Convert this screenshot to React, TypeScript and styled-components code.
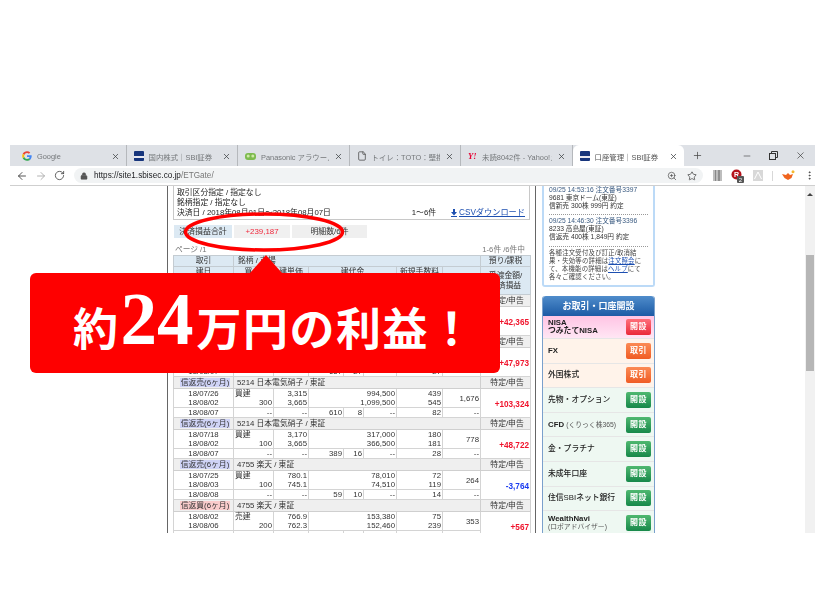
import React from "react";
import styled, { createGlobalStyle } from "styled-components";
import { ArrowLeft, ArrowRight, RotateCw, Lock, ZoomIn, Star, MoreVertical, X, Plus, Minus, File } from "lucide-react";

const Global = createGlobalStyle`
  html, body { margin: 0; padding: 0; background: #fff; }
  body { font-family: "Liberation Sans", "Noto Sans CJK JP", sans-serif; }
  * { box-sizing: border-box; }
`;

const Page = styled.div`
  position: relative;
  width: 825px;
  height: 615px;
  overflow: hidden;
  padding: 145px 10px 0;
  background: #fff;
`;
const Browser = styled.div`
  width: 805px;
  height: 388px;
  display: flex;
  flex-direction: column;
  overflow: hidden;
  filter: blur(0.35px);
`;
const TabStrip = styled.div`
  height: 21px;
  flex: none;
  background: #dee1e6;
  display: flex;
  align-items: stretch;
  padding-left: 5px;
`;
const Tab = styled.div<{ $active?: boolean }>`
  width: 111.5px;
  display: flex;
  align-items: center;
  gap: 5px;
  padding: 1px 6px 0 7px;
  font-size: 7.4px;
  color: ${(p) => (p.$active ? "#555" : "#74777a")};
  background: ${(p) => (p.$active ? "#fff" : "transparent")};
  border-radius: ${(p) => (p.$active ? "6px 6px 0 0" : "0")};
  border-right: ${(p) => (p.$active ? "none" : "1px solid #b5b8bc")};
  background-clip: ${(p) => (p.$active ? "border-box" : "padding-box")};
`;
const TabLabel = styled.span`
  flex: 1;
  min-width: 0;
  white-space: nowrap;
  overflow: hidden;
`;
const TabClose = styled(X)`
  flex: none;
  color: #3c4043;
`;
const NewTab = styled.div`
  width: 26px;
  display: flex;
  align-items: center;
  justify-content: center;
  color: #444;
`;
const WindowControls = styled.div`
  margin-left: auto;
  display: flex;
  align-items: center;
  color: #333;
  padding-right: 1px;
`;
const WindowButton = styled.div`
  width: 27px;
  display: flex;
  justify-content: center;
`;
const SbiIcon = styled.span`
  flex: none;
  width: 10px;
  height: 10px;
  background: linear-gradient(#17357c 0 55%, #e8e8f0 55% 70%, #17357c 70%);
  border-radius: 1px;
`;
const YahooMark = styled.span`
  flex: none;
  color: #e60033;
  font: italic bold 8.5px "Liberation Serif", serif;
  width: 9px;
`;
const Toolbar = styled.div`
  height: 20px;
  flex: none;
  background: #fff;
  border-bottom: 1px solid #cfcfcf;
  display: flex;
  align-items: center;
  padding: 0 7px 0 6px;
  color: #555;
`;
const NavIcons = styled.div`
  display: flex;
  gap: 7px;
  width: 58px;
  flex: none;
  color: #444;
`;
const Omnibox = styled.div`
  flex: none;
  width: 629px;
  height: 15px;
  border-radius: 8px;
  background: #f1f3f4;
  display: flex;
  align-items: center;
  padding: 0 6px;
  gap: 6px;
`;
const UrlText = styled.div`
  flex: 1;
  font-size: 8.2px;
  color: #202124;
`;
const UrlPath = styled.span`
  color: #777;
`;
const OmniIcons = styled.div`
  display: flex;
  gap: 10px;
  color: #444;
`;
const Extensions = styled.div`
  flex: 1;
  display: flex;
  align-items: center;
  gap: 9px;
  padding-left: 10px;
`;
const ExtSeparator = styled.span`
  width: 1px;
  height: 10px;
  background: #d8d8d8;
`;
const Content = styled.div`
  flex: 1;
  min-height: 0;
  display: flex;
  background: #fff;
  padding-left: 157px;
  overflow: hidden;
`;
const MainColumn = styled.div`
  flex: none;
  width: 369px;
  border-left: 1px solid #666;
  border-right: 1px solid #666;
  padding: 0 5px;
  color: #222;
  font-size: 7.8px;
`;
const FilterBox = styled.div`
  height: 34px;
  border: 1px solid #c8c8c8;
  border-top: none;
  padding: 2px 3px 0;
  line-height: 10px;
  font-size: 7.8px;
  position: relative;
`;
const FilterLast = styled.div`
  display: flex;
  justify-content: space-between;
  padding-right: 1px;
`;
const FilterRight = styled.div`
  display: flex;
  gap: 15px;
`;
const CsvLink = styled.span`
  color: #1d4fb0;
  text-decoration: underline;
  display: inline-flex;
  align-items: center;
  gap: 2px;
  font-size: 8.2px;
`;
const SummaryRow = styled.div`
  display: flex;
  gap: 2px;
  margin: 5px 0 0 1px;
  height: 13px;
  line-height: 13px;
  text-align: center;
  font-size: 7.9px;
`;
const SummaryCell = styled.div<{ $w: number; $bg: string; $red?: boolean }>`
  width: ${(p) => p.$w}px;
  background: ${(p) => p.$bg};
  color: ${(p) => (p.$red ? "#f0283c" : "#333")};
`;
const PagerRow = styled.div`
  display: flex;
  justify-content: space-between;
  margin-top: 7px;
  height: 10px;
  line-height: 10px;
  padding: 0 5px 0 2px;
  color: #777;
  font-size: 7.7px;
`;
const Trade = styled.table`
  width: 357px;
  table-layout: fixed;
  border-collapse: collapse;
  font-size: 7.8px;
  line-height: 9px;
  color: #333;
`;
const HeadCell = styled.td`
  background: #dce9f3;
  border: 1px solid #c4ccd2;
  text-align: center;
  padding: 0;
  vertical-align: top;
  height: 11px;
  line-height: 10px;
`;
const HeadMiddle = styled(HeadCell)`
  vertical-align: middle;
`;
const HeadLeft = styled(HeadCell)`
  text-align: left;
  padding-left: 4px;
`;
const GroupCell = styled.td<{ $center?: boolean }>`
  background: #efefef;
  border: 1px solid #cfcfcf;
  height: 12px;
  padding: 0 0 0 3px;
  text-align: ${(p) => (p.$center ? "center" : "left")};
  white-space: nowrap;
`;
const TypeLabel = styled.span<{ $kind: "sell" | "buy" }>`
  background: ${(p) => (p.$kind === "sell" ? "#cfd3f6" : "#f9cccc")};
  padding: 0 1px;
`;
const DataCell = styled.td<{ $h?: number }>`
  background: #fff;
  border: 1px solid #d4d4d4;
  padding: 0 1px;
  height: ${(p) => p.$h ?? 10}px;
  text-align: right;
  white-space: nowrap;
`;
const DateCell = styled(DataCell)`
  text-align: center;
`;
const ProfitCell = styled(DataCell)<{ $loss?: boolean }>`
  color: ${(p) => (p.$loss ? "#1a3cf0" : "#f0142c")};
  font-weight: 700;
  font-size: 8.2px;
  vertical-align: middle;
  padding-top: 2px;
`;
const SplitLine = styled.div<{ $between?: boolean }>`
  display: flex;
  justify-content: ${(p) => (p.$between ? "flex-start" : "flex-end")};
`;
const Side = styled.div`
  flex: none;
  width: 113px;
  margin-left: 6px;
  display: flex;
  flex-direction: column;
  gap: 9px;
`;
const OrderBox = styled.div`
  height: 101px;
  flex: none;
  border: 2px solid #bcdaf7;
  border-top: none;
  border-radius: 0 0 3px 3px;
  padding: 0 5px;
  font-size: 6.7px;
  line-height: 8.1px;
  color: #333;
  white-space: nowrap;
`;
const OrderHead = styled.div`
  color: #3a5a80;
`;
const Dots = styled.div`
  border-top: 1px dotted #999;
  margin: 4px 0 2px;
`;
const Notes = styled.div`
  white-space: normal;
  font-size: 6.4px;
  letter-spacing: 0.2px;
  color: #444;
`;
const NoteLink = styled.span`
  color: #1d4fb0;
  text-decoration: underline;
`;
const MenuPanel = styled.div`
  border: solid #7aa0cc;
  border-width: 0 1px;
  border-radius: 3px 3px 0 0;
`;
const MenuTitle = styled.div`
  height: 20px;
  line-height: 20px;
  text-align: center;
  font-size: 9px;
  font-weight: 700;
  color: #fff;
  border-radius: 3px 3px 0 0;
  background: linear-gradient(#4f8ccb, #1c5aa5);
`;
const MenuRow = styled.div<{ $bg: string; $h?: number }>`
  height: ${(p) => p.$h ?? 24.6}px;
  display: flex;
  align-items: center;
  justify-content: space-between;
  padding: 0 3px 0 5px;
  background: ${(p) => p.$bg};
  border-bottom: 1px solid #e6e6e6;
  font-size: 7.8px;
  line-height: 8px;
  color: #222;
  font-weight: 500;
`;
const MenuStrong = styled.span`
  font-weight: 700;
`;
const MenuSub = styled.span`
  font-size: 6.8px;
  font-weight: 400;
  color: #555;
`;
const MenuButton = styled.span<{ $kind: "red" | "orange" | "green" }>`
  flex: none;
  width: 25px;
  height: 16px;
  border-radius: 2px;
  text-align: center;
  line-height: 16px;
  font-size: 8px;
  font-weight: 700;
  letter-spacing: 0.5px;
  color: #fff;
  background: ${(p) =>
    p.$kind === "red"
      ? "linear-gradient(#ff6f7a,#ea2a3a)"
      : p.$kind === "orange"
      ? "linear-gradient(#fb8a55,#f05c24)"
      : "linear-gradient(#4fb870,#17884a)"};
`;
const Scrollbar = styled.div`
  margin-left: auto;
  flex: none;
  width: 10px;
  background: #f1f1f1;
  display: flex;
  flex-direction: column;
  align-items: center;
`;
const ScrollArrow = styled.div`
  height: 10px;
  padding-top: 4px;
  width: 100%;
  background: #f1f1f1;
  display: flex;
  justify-content: center;
  &::before {
    content: "";
    border: 3px solid transparent;
    border-top: none;
    border-bottom: 3px solid #444;
  }
`;
const ScrollThumb = styled.div`
  margin-top: 59px;
  width: 8px;
  height: 116px;
  background: #b6b6b6;
`;
const Ellipse = styled.svg`
  position: absolute;
  left: 180px;
  top: 208px;
`;
const Callout = styled.div`
  position: absolute;
  left: 30px;
  top: 273px;
  width: 470px;
  height: 100px;
  border-radius: 6px;
  background: #fe0000;
  color: #fff;
  display: flex;
  align-items: center;
  padding: 8px 0 0 43px;
  font-weight: 700;
  font-size: 45px;
  line-height: 60px;
  letter-spacing: 1.5px;
  white-space: nowrap;
  font-family: "Noto Sans CJK JP", sans-serif;
  &::before {
    content: "";
    position: absolute;
    left: 220px;
    top: -18px;
    border-left: 16px solid transparent;
    border-right: 16px solid transparent;
    border-bottom: 18px solid #fe0000;
  }
`;
const BigDigits = styled.span`
  font-family: "Liberation Serif", serif;
  font-size: 73px;
  letter-spacing: 0;
  margin: -14px 3px 0 1px;
`;

const COLS = [60, 40, 35, 35, 20, 33, 46, 38, 50];

type Group = {
  kind: "sell" | "buy";
  type: string;
  name: string;
  d: [string, string, string];
  side: string;
  qty: string;
  price: [string, string];
  amount: [string, string];
  fee: [string, string];
  cost: string;
  sub: [string, string, string];
  profit: string;
  loss?: boolean;
};

const GROUPS: Group[] = [
  { kind: "sell", type: "信返売(6ヶ月)", name: "5214 日本電気硝子 / 東証", d: ["18/07/18", "18/08/02", "18/08/07"], side: "買建", qty: "300", price: ["3,170", "3,665"], amount: ["951,000", "1,099,500"], fee: ["439", "545"], cost: "1,102", sub: ["389", "16", "82"], profit: "+42,365" },
  { kind: "sell", type: "信返売(6ヶ月)", name: "5214 日本電気硝子 / 東証", d: ["18/07/26", "18/08/02", "18/08/07"], side: "買建", qty: "100", price: ["3,170", "3,665"], amount: ["317,000", "366,500"], fee: ["180", "181"], cost: "778", sub: ["657", "27", "27"], profit: "+47,973" },
  { kind: "sell", type: "信返売(6ヶ月)", name: "5214 日本電気硝子 / 東証", d: ["18/07/26", "18/08/02", "18/08/07"], side: "買建", qty: "300", price: ["3,315", "3,665"], amount: ["994,500", "1,099,500"], fee: ["439", "545"], cost: "1,676", sub: ["610", "8", "82"], profit: "+103,324" },
  { kind: "sell", type: "信返売(6ヶ月)", name: "5214 日本電気硝子 / 東証", d: ["18/07/18", "18/08/02", "18/08/07"], side: "買建", qty: "100", price: ["3,170", "3,665"], amount: ["317,000", "366,500"], fee: ["180", "181"], cost: "778", sub: ["389", "16", "28"], profit: "+48,722" },
  { kind: "sell", type: "信返売(6ヶ月)", name: "4755 楽天 / 東証", d: ["18/07/25", "18/08/03", "18/08/08"], side: "買建", qty: "100", price: ["780.1", "745.1"], amount: ["78,010", "74,510"], fee: ["72", "119"], cost: "264", sub: ["59", "10", "14"], profit: "-3,764", loss: true },
  { kind: "buy", type: "信返買(6ヶ月)", name: "4755 楽天 / 東証", d: ["18/08/02", "18/08/06", "18/08/09"], side: "売建", qty: "200", price: ["766.9", "762.3"], amount: ["153,380", "152,460"], fee: ["75", "239"], cost: "353", sub: ["14", "3", "25"], profit: "+567" },
];

const MENU: { label: React.ReactNode; bg: string; btn: string; kind: "red" | "orange" | "green"; h?: number }[] = [
  { label: <MenuStrong>NISA<br />つみたてNISA</MenuStrong>, bg: "linear-gradient(#ffc4e4,#ffe6f4)", btn: "開設", kind: "red", h: 23 },
  { label: <MenuStrong>FX</MenuStrong>, bg: "#fff3ea", btn: "取引", kind: "orange" },
  { label: "外国株式", bg: "#fff3ea", btn: "取引", kind: "orange" },
  { label: "先物・オプション", bg: "#eef8f2", btn: "開設", kind: "green" },
  { label: <><MenuStrong>CFD</MenuStrong> <MenuSub>(くりっく株365)</MenuSub></>, bg: "#eef8f2", btn: "開設", kind: "green" },
  { label: "金・プラチナ", bg: "#eef8f2", btn: "開設", kind: "green" },
  { label: "未成年口座", bg: "#eef8f2", btn: "開設", kind: "green" },
  { label: "住信SBIネット銀行", bg: "#eef8f2", btn: "開設", kind: "green" },
  { label: <><MenuStrong>WealthNavi</MenuStrong><br /><MenuSub>(ロボアドバイザー)</MenuSub></>, bg: "#eef8f2", btn: "開設", kind: "green" },
];

const GoogleIcon = () => (
  <svg width="10" height="10" viewBox="0 0 48 48" style={{ flex: "none" }}>
    <path fill="#EA4335" d="M24 10c3.5 0 6.6 1.2 9 3.5l6.7-6.7C35.600 3.100 30.300 1 24 1 15 1 7.300 6.200 3.500 13.700l7.800 6C13.200 14 18.100 10 24 10z" />
    <path fill="#4285F4" d="M46.500 24.500c0-1.600-.1-3.100-.4-4.500H24v9h12.700c-.6 2.900-2.200 5.400-4.700 7l7.300 5.700c4.300-4 7.200-9.900 7.200-17.200z" />
    <path fill="#FBBC05" d="M11.300 28.700C10.800 27.200 10.500 25.600 10.500 24s.3-3.200.8-4.700l-7.800-6C1.900 16.500 1 20.100 1 24s.9 7.500 2.500 10.700l7.800-6z" />
    <path fill="#34A853" d="M24 47c6.200 0 11.500-2 15.300-5.600L32 35.700c-2 1.400-4.700 2.300-8 2.300-5.900 0-10.800-4-12.700-9.300l-7.800 6C7.300 41.800 15 47 24 47z" />
  </svg>
);
const PanasonicIcon = () => (
  <svg width="11" height="9" viewBox="0 0 11 9" style={{ flex: "none" }}>
    <rect x="0" y="1" width="11" height="7" rx="3" fill="#7dbb4e" />
    <circle cx="3.200" cy="4" r="1.500" fill="#cfe8a8" />
    <circle cx="7.800" cy="4" r="1.500" fill="#cfe8a8" />
  </svg>
);
const BarsIcon = () => (
  <svg width="9" height="11" viewBox="0 0 9 11">
    <rect width="9" height="11" fill="#bdbdbd" />
    <rect x="2" width="1" height="11" fill="#888" />
    <rect x="5" width="2" height="11" fill="#8e8e8e" />
  </svg>
);
const BadgeIcon = () => (
  <svg width="13" height="14" viewBox="0 0 13 14">
    <circle cx="5.500" cy="5.500" r="5" fill="#b5121b" />
    <text x="5.500" y="8" fontSize="7" fontWeight="700" fill="#fff" textAnchor="middle" fontFamily="Liberation Sans">R</text>
    <rect x="6" y="7" width="7" height="7" rx="1" fill="#555" />
    <text x="9.500" y="13" fontSize="6" fill="#fff" textAnchor="middle" fontFamily="Liberation Sans">2</text>
  </svg>
);
const PdfIcon = () => (
  <svg width="10" height="11" viewBox="0 0 10 11">
    <rect width="10" height="11" fill="#d8d8d8" />
    <path d="M1.500 9 L5 2 L8.500 9" fill="none" stroke="#fff" strokeWidth="1" />
  </svg>
);
const FoxIcon = () => (
  <svg width="13" height="11" viewBox="0 0 13 11">
    <path d="M0 4 L4 5 L6 3 L8 5 L11 4 L9.500 8 L6 10 L2.500 8 Z" fill="#f0641e" />
    <circle cx="11" cy="1.800" r="1.500" fill="#f5b82e" />
  </svg>
);
const RestoreIcon = () => (
  <svg width="9" height="9" viewBox="0 0 9 9" fill="none" stroke="#333" strokeWidth="1">
    <rect x="0.500" y="2.500" width="6" height="6" />
    <path d="M2.500 2.500 V0.500 H8.500 V6.500 H6.500" />
  </svg>
);
const DownloadIcon = () => (
  <svg width="6" height="8" viewBox="0 0 6 8">
    <path d="M2 0h2v3h2L3 6.500 0 3h2zM0 7h6v1H0z" fill="#1d4fb0" />
  </svg>
);

const TABS: { icon: React.ReactNode; label: string; active?: boolean }[] = [
  { icon: <GoogleIcon />, label: "Google" },
  { icon: <SbiIcon />, label: "国内株式｜SBI証券" },
  { icon: <PanasonicIcon />, label: "Panasonic アラウーノS2" },
  { icon: <File size={10} color="#555" />, label: "トイレ：TOTO：壁掛水" },
  { icon: <YahooMark>Y!</YahooMark>, label: "未読8042件 - Yahoo!メー" },
  { icon: <SbiIcon />, label: "口座管理｜SBI証券", active: true },
];

export default function App() {
  return (
    <Page>
      <Global />
      <Browser>
        <TabStrip>
          {TABS.map((t) => (
            <Tab key={t.label} $active={t.active}>
              {t.icon}
              <TabLabel>{t.label}</TabLabel>
              <TabClose size={9} strokeWidth={2} />
            </Tab>
          ))}
          <NewTab><Plus size={11} strokeWidth={1.6} /></NewTab>
          <WindowControls>
            <WindowButton><Minus size={10} strokeWidth={1.4} /></WindowButton>
            <WindowButton><RestoreIcon /></WindowButton>
            <WindowButton><X size={11} strokeWidth={1.4} /></WindowButton>
          </WindowControls>
        </TabStrip>
        <Toolbar>
          <NavIcons>
            <ArrowLeft size={12} strokeWidth={1.8} />
            <ArrowRight size={12} strokeWidth={1.8} color="#aaa" />
            <RotateCw size={11} strokeWidth={1.8} />
          </NavIcons>
          <Omnibox>
            <Lock size={8} fill="#555" strokeWidth={1.5} />
            <UrlText>https://site1.sbisec.co.jp<UrlPath>/ETGate/</UrlPath></UrlText>
            <OmniIcons>
              <ZoomIn size={10} strokeWidth={1.6} />
              <Star size={10} strokeWidth={1.8} />
            </OmniIcons>
          </Omnibox>
          <Extensions>
            <BarsIcon />
            <BadgeIcon />
            <PdfIcon />
            <ExtSeparator />
            <FoxIcon />
            <MoreVertical size={11} strokeWidth={2} color="#444" />
          </Extensions>
        </Toolbar>
        <Content>
          <MainColumn>
            <FilterBox>
              <div>取引区分指定 / 指定なし</div>
              <div>銘柄指定 /  指定なし</div>
              <FilterLast>
                <span>決済日 / 2018年08月01日～2018年08月07日</span>
                <FilterRight>
                  <span>1～6件</span>
                  <CsvLink><DownloadIcon />CSVダウンロード</CsvLink>
                </FilterRight>
              </FilterLast>
            </FilterBox>
            <SummaryRow>
              <SummaryCell $w={58} $bg="#dce9f3">決済損益合計</SummaryCell>
              <SummaryCell $w={56} $bg="#f0f0f0" $red>+239,187</SummaryCell>
              <SummaryCell $w={75} $bg="#efefef">明細数/6件</SummaryCell>
            </SummaryRow>
            <PagerRow>
              <span>ページ /1</span>
              <span>1-6件 /6件中</span>
            </PagerRow>
            <Trade>
              <colgroup>
                {COLS.map((w, i) => <col key={i} width={w} />)}
              </colgroup>
              <tbody>
                <tr>
                  <HeadMiddle>取引</HeadMiddle>
                  <HeadLeft colSpan={7}>銘柄 / 市場</HeadLeft>
                  <HeadMiddle>預り/課税</HeadMiddle>
                </tr>
                <tr>
                  <HeadCell style={{ height: 28 }}>建日</HeadCell>
                  <HeadCell>買/売</HeadCell>
                  <HeadCell>建単価</HeadCell>
                  <HeadCell colSpan={3}>建代金</HeadCell>
                  <HeadCell>新規手数料</HeadCell>
                  <HeadMiddle>諸費用(税)</HeadMiddle>
                  <HeadMiddle>受渡金額/<br />決済損益</HeadMiddle>
                </tr>
                {GROUPS.map((g, i) => (
                  <React.Fragment key={i}>
                    <tr>
                      <GroupCell $center><TypeLabel $kind={g.kind}>{g.type}</TypeLabel></GroupCell>
                      <GroupCell colSpan={7}>{g.name}</GroupCell>
                      <GroupCell $center>特定/申告</GroupCell>
                    </tr>
                    <tr>
                      <DateCell $h={19}>{g.d[0]}<br />{g.d[1]}</DateCell>
                      <DataCell $h={19}>
                        <SplitLine $between>{g.side}</SplitLine>
                        <SplitLine>{g.qty}</SplitLine>
                      </DataCell>
                      <DataCell $h={19}>{g.price[0]}<br />{g.price[1]}</DataCell>
                      <DataCell $h={19} colSpan={3}>{g.amount[0]}<br />{g.amount[1]}</DataCell>
                      <DataCell $h={19}>{g.fee[0]}<br />{g.fee[1]}</DataCell>
                      <DataCell $h={19}>{g.cost}</DataCell>
                      <ProfitCell $h={19} rowSpan={2} $loss={g.loss}>{g.profit}</ProfitCell>
                    </tr>
                    <tr>
                      <DateCell>{g.d[2]}</DateCell>
                      <DataCell>--</DataCell>
                      <DataCell>--</DataCell>
                      <DataCell>{g.sub[0]}</DataCell>
                      <DataCell>{g.sub[1]}</DataCell>
                      <DataCell>--</DataCell>
                      <DataCell>{g.sub[2]}</DataCell>
                      <DataCell>--</DataCell>
                    </tr>
                  </React.Fragment>
                ))}
              </tbody>
            </Trade>
          </MainColumn>
          <Side>
            <OrderBox>
              <OrderHead>09/25 14:53:16 注文番号3397</OrderHead>
              <div>9681 東京ドーム(東証)</div>
              <div>信新売 300株 999円 約定</div>
              <Dots />
              <OrderHead>09/25 14:46:30 注文番号3396</OrderHead>
              <div>8233 高島屋(東証)</div>
              <div>信返売 400株 1,849円 約定</div>
              <Dots />
              <Notes>
                各種注文受付及び訂正/取消結果・失効等の詳細は<NoteLink>注文照会</NoteLink>にて、本機能の詳細は<NoteLink>ヘルプ</NoteLink>にて各々ご確認ください。
              </Notes>
            </OrderBox>
            <MenuPanel>
              <MenuTitle>お取引・口座開設</MenuTitle>
              {MENU.map((m, i) => (
                <MenuRow key={i} $bg={m.bg} $h={m.h}>
                  <span>{m.label}</span>
                  <MenuButton $kind={m.kind}>{m.btn}</MenuButton>
                </MenuRow>
              ))}
            </MenuPanel>
          </Side>
          <Scrollbar>
            <ScrollArrow />
            <ScrollThumb />
          </Scrollbar>
        </Content>
      </Browser>
      <Ellipse width="170" height="48" viewBox="0 0 170 48">
        <ellipse cx="84" cy="24" rx="78.500" ry="18" fill="none" stroke="#f00" strokeWidth="3.500" />
      </Ellipse>
      <Callout>
        約<BigDigits>24</BigDigits>万円の利益！
      </Callout>
    </Page>
  );
}
